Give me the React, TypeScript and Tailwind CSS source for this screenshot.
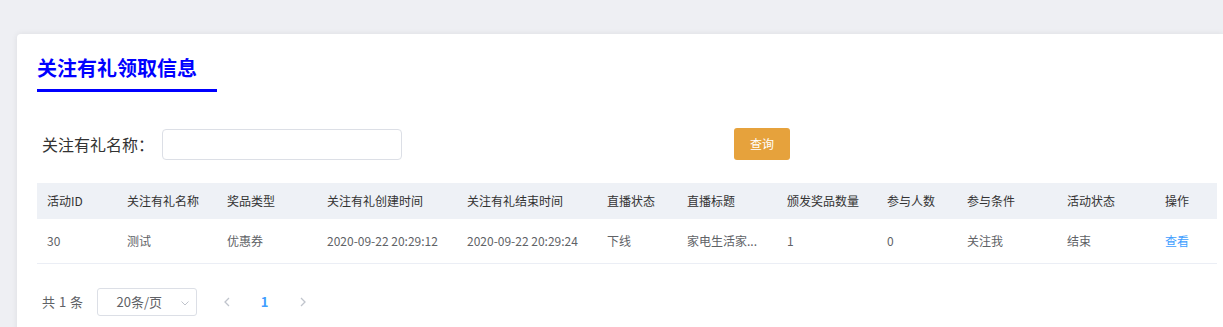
import React from "react";

const columns = [
  { title: "活动ID", w: "w-[80px]" },
  { title: "关注有礼名称", w: "w-[100px]" },
  { title: "奖品类型", w: "w-[100px]" },
  { title: "关注有礼创建时间", w: "w-[140px]" },
  { title: "关注有礼结束时间", w: "w-[140px]" },
  { title: "直播状态", w: "w-[80px]" },
  { title: "直播标题", w: "w-[100px]" },
  { title: "颁发奖品数量", w: "w-[100px]" },
  { title: "参与人数", w: "w-[80px]" },
  { title: "参与条件", w: "w-[100px]" },
  { title: "活动状态", w: "w-[98px]" },
  { title: "操作", w: "flex-1" },
];

const row = [
  "30",
  "测试",
  "优惠券",
  "2020-09-22 20:29:12",
  "2020-09-22 20:29:24",
  "下线",
  "家电生活家...",
  "1",
  "0",
  "关注我",
  "结束",
];

export default function App() {
  return (
    <div
      className="w-[1223px] h-[327px] bg-[#eeeff3] overflow-hidden pt-[34px] pl-[17px]"
      style={{ fontFamily: '"Noto Sans CJK SC", "Noto Sans", sans-serif' }}
    >
      <div className="bg-white rounded-tl-[4px] shadow-[0_0_6px_rgba(0,0,0,0.08)] h-[320px] pl-[20px] pr-[6px]">
        {/* Title */}
        <div className="pt-[20px]">
          <h2 className="text-[20px] leading-[28px] font-bold text-[#0000ff]">关注有礼领取信息</h2>
          <div className="w-[180px] h-[3px] bg-[#0000ff] mt-[7px]" />
        </div>

        {/* Search */}
        <div className="flex items-center mt-[36px] h-[32px]">
          <label className="pl-[5px] w-[125px] text-[16px] text-[#333] leading-[32px]">关注有礼名称：</label>
          <input className="w-[240px] h-[31px] border border-[#dcdfe6] rounded-[4px] outline-none px-3 text-[13px]" />
          <button className="ml-[332px] w-[56px] h-[32px] rounded-[3px] bg-[#e6a23c] text-white text-[12px]">
            查询
          </button>
        </div>

        {/* Table */}
        <div className="mt-[23px] text-[12px]">
          <div className="flex h-[36px] items-center bg-[#eef1f6] text-[#333]">
            {columns.map((c) => (
              <div key={c.title} className={`${c.w} px-[10px] whitespace-nowrap`}>
                {c.title}
              </div>
            ))}
          </div>
          <div className="flex h-[45px] items-center border-b border-[#ebeef5] text-[#606266]">
            {row.map((v, i) => (
              <div key={i} className={`${columns[i].w} px-[10px] whitespace-nowrap`}>
                {v}
              </div>
            ))}
            <div className="flex-1 px-[10px] text-[#409eff]">查看</div>
          </div>
        </div>

        {/* Pagination */}
        <div className="flex items-center mt-[24px] h-[28px] text-[13px] text-[#606266]">
          <span className="pl-[5px] mr-[13px] tracking-[0.5px]">共 1 条</span>
          <div className="relative w-[100px] h-[28px] border border-[#dcdfe6] rounded-[3px] flex items-center pl-[19px]">
            <span>20条/页</span>
            <svg className="absolute right-[6px] top-[9px]" width="10" height="10" viewBox="0 0 10 10" fill="none">
              <path d="M1.5 3.5 L5 7 L8.5 3.5" stroke="#c0c4cc" strokeWidth="1" />
            </svg>
          </div>
          <div className="flex items-center ml-[24px]">
            <svg width="12" height="12" viewBox="0 0 12 12" fill="none">
              <path d="M8 2 L4 6 L8 10" stroke="#c0c4cc" strokeWidth="1.3" />
            </svg>
            <span className="w-[20px] text-center ml-[22px] mr-[22px] text-[#409eff] font-bold text-[13px]">1</span>
            <svg width="12" height="12" viewBox="0 0 12 12" fill="none">
              <path d="M4 2 L8 6 L4 10" stroke="#c0c4cc" strokeWidth="1.3" />
            </svg>
          </div>
        </div>
      </div>
    </div>
  );
}
